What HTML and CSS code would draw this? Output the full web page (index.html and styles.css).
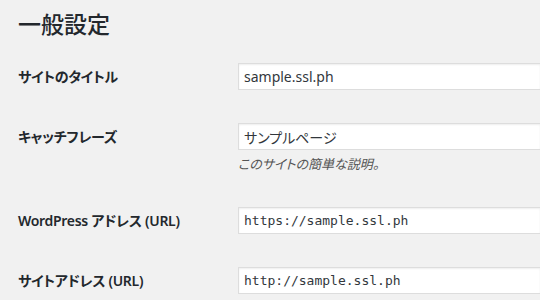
FILE: index.html
```html
<!DOCTYPE html>
<html lang="ja">
<head>
    <meta charset="UTF-8">
    <meta name="viewport" content="width=device-width, initial-scale=1.0">
    <title>一般設定</title>
    <link rel="stylesheet" href="styles.css">
</head>
<body>
    <div class="wrap">
        <h1>一般設定</h1>
        <form class="form-table">
            <div class="row">
                <label for="blogname">サイトのタイトル</label>
                <div class="field">
                    <input type="text" id="blogname" value="sample.ssl.ph">
                </div>
            </div>
            <div class="row">
                <label for="blogdescription">キャッチフレーズ</label>
                <div class="field">
                    <input type="text" id="blogdescription" value="サンプルページ">
                    <p class="description">このサイトの簡単な説明。</p>
                </div>
            </div>
            <div class="row">
                <label for="siteurl">WordPress アドレス (URL)</label>
                <div class="field">
                    <input type="text" id="siteurl" class="code" value="https://sample.ssl.ph">
                </div>
            </div>
            <div class="row">
                <label for="home">サイトアドレス (URL)</label>
                <div class="field">
                    <input type="text" id="home" class="code" value="http://sample.ssl.ph">
                </div>
            </div>
        </form>
    </div>
</body>
</html>
```

FILE: styles.css
```css
html, body {
    margin: 0;
    padding: 0;
    background-color: #f1f1f1;
    overflow: hidden;
}
body {
    font-family: "Noto Sans", "Noto Sans CJK JP", sans-serif;
    font-feature-settings: "palt";
    color: #23282d;
    font-size: 14px;
}
.wrap {
    padding: 8px 0 0 18px;
}
h1 {
    font-size: 23px;
    font-weight: 500;
    line-height: 32px;
    margin: 0 0 7px;
}
.row {
    display: grid;
    grid-template-columns: 220px 1fr;
    padding: 16px 0;
}
.row label {
    font-weight: 600;
    line-height: 28px;
    letter-spacing: -0.3px;
}
.field {
    min-width: 0;
}
.field input {
    display: block;
    width: 100%;
    height: 27px;
    box-sizing: border-box;
    margin: 0;
    padding: 0 5px;
    border: 1px solid #ddd;
    border-right: none;
    box-shadow: inset 0 1px 2px rgba(0, 0, 0, 0.07);
    background-color: #fff;
    color: #32373c;
    font-family: "Noto Sans", "Noto Sans CJK JP", sans-serif;
    font-feature-settings: "palt";
    font-size: 14px;
    outline: none;
}
.field input.code {
    font-family: "DejaVu Sans Mono", monospace;
    font-size: 13px;
}
.description {
    margin: 4px 0 1px;
    font-size: 13px;
    font-style: italic;
    color: #555;
    line-height: 20px;
}
```
